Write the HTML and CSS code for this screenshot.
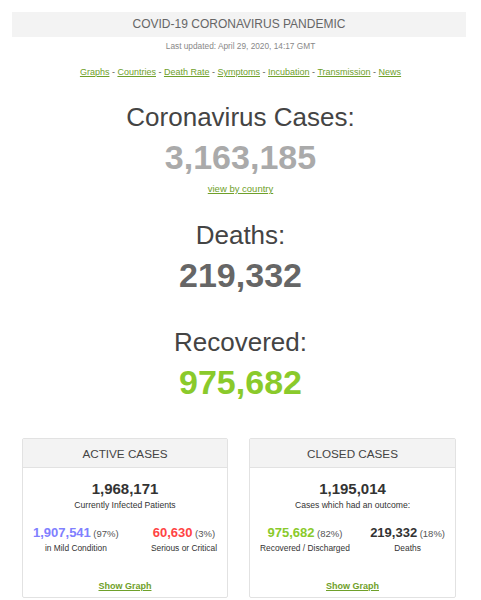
FILE: index.html
```html
<!DOCTYPE html>
<html lang="en">
<head>
<meta charset="utf-8">
<title>COVID-19 Coronavirus Pandemic</title>
<link rel="stylesheet" href="styles.css">
</head>
<body>
<div class="page">
  <div class="title-bar">COVID-19 CORONAVIRUS PANDEMIC</div>
  <div class="updated">Last updated: April 29, 2020, 14:17 GMT</div>
  <nav class="links">
    <a href="#">Graphs</a> - <a href="#">Countries</a> - <a href="#">Death Rate</a> - <a href="#">Symptoms</a> - <a href="#">Incubation</a> - <a href="#">Transmission</a> - <a href="#">News</a>
  </nav>

  <section class="counter">
    <h1 class="counter-label">Coronavirus Cases:</h1>
    <div class="counter-number cases">3,163,185</div>
    <a class="view-link" href="#">view by country</a>
  </section>

  <section class="counter deaths-block">
    <h1 class="counter-label">Deaths:</h1>
    <div class="counter-number deaths">219,332</div>
  </section>

  <section class="counter recovered-block">
    <h1 class="counter-label">Recovered:</h1>
    <div class="counter-number recovered">975,682</div>
  </section>

  <div class="cards">
    <div class="card">
      <div class="card-head">ACTIVE CASES</div>
      <div class="card-body">
        <div class="total">1,968,171</div>
        <div class="total-caption">Currently Infected Patients</div>
        <div class="split">
          <div class="split-col">
            <div><span class="num mild">1,907,541</span> <span class="pct">(97%)</span></div>
            <div class="split-caption">in Mild Condition</div>
          </div>
          <div class="split-col">
            <div><span class="num critical">60,630</span> <span class="pct">(3%)</span></div>
            <div class="split-caption">Serious or Critical</div>
          </div>
        </div>
        <a class="graph-link" href="#">Show Graph</a>
      </div>
    </div>

    <div class="card">
      <div class="card-head">CLOSED CASES</div>
      <div class="card-body">
        <div class="total">1,195,014</div>
        <div class="total-caption">Cases which had an outcome:</div>
        <div class="split">
          <div class="split-col">
            <div><span class="num good">975,682</span> <span class="pct">(82%)</span></div>
            <div class="split-caption">Recovered / Discharged</div>
          </div>
          <div class="split-col">
            <div><span class="num dark">219,332</span> <span class="pct">(18%)</span></div>
            <div class="split-caption">Deaths</div>
          </div>
        </div>
        <a class="graph-link" href="#">Show Graph</a>
      </div>
    </div>
  </div>
</div>
</body>
</html>
```

FILE: styles.css
```css
html, body {
  margin: 0;
  padding: 0;
  background: #ffffff;
}

body {
  font-family: "Liberation Sans", Arial, sans-serif;
  color: #444;
}

.page {
  padding-top: 12px;
  text-align: center;
}

.title-bar {
  margin: 0 15px 0 12px;
  height: 25px;
  line-height: 25px;
  background: #f3f3f3;
  color: #666;
  font-size: 12px;
}

.updated {
  margin-top: 3px;
  font-size: 8.3px;
  line-height: 12px;
  color: #888;
}

.links {
  margin-top: 14px;
  font-size: 9px;
  line-height: 12px;
  color: #555;
}

.links a,
.view-link,
.graph-link {
  color: #6fa02a;
  text-decoration: underline;
}

.counter {
  display: flex;
  flex-direction: column;
  align-items: center;
}

.counter-label {
  margin: 0;
  font-size: 26px;
  line-height: 30px;
  font-weight: normal;
  color: #444;
}

.counter-number {
  font-size: 34px;
  line-height: 40px;
  font-weight: bold;
}

.counter:first-of-type {
  margin-top: 24px;
}

.counter-label + .counter-number {
  margin-top: 5px;
}

.cases { color: #aaa; }
.deaths { color: #666; }
.recovered { color: #8aca2b; }

.view-link {
  margin-top: 6px;
  font-size: 9.5px;
  line-height: 12px;
}

.deaths-block { margin-top: 25px; }
.recovered-block { margin-top: 32px; }

.cards {
  display: grid;
  grid-template-columns: 206px 207px;
  column-gap: 21px;
  margin: 36px 0 0 22px;
}

.card {
  border: 1px solid #e2e2e2;
  border-radius: 2px;
  background: #fff;
}

.card-head {
  height: 28px;
  line-height: 29px;
  background: #f3f3f3;
  border-bottom: 1px solid #e2e2e2;
  font-size: 11.7px;
  color: #444;
}

.card-body {
  display: flex;
  flex-direction: column;
  align-items: center;
  padding: 12px 0 5px;
}

.total {
  font-size: 15px;
  line-height: 18px;
  font-weight: bold;
  color: #333;
}

.total-caption {
  margin-top: 2px;
  font-size: 8.6px;
  line-height: 11px;
  color: #333;
}

.split {
  align-self: stretch;
  display: flex;
  justify-content: space-between;
  padding: 0 10px;
  margin-top: 14px;
}

.split-col {
  display: flex;
  flex-direction: column;
  align-items: center;
  font-size: 9px;
  line-height: 16px;
}

.num {
  font-size: 13px;
  font-weight: bold;
}

.mild { color: #8080ff; }
.critical { color: #ff4444; }
.good { color: #8aca2b; }
.dark { color: #333; }

.pct {
  font-size: 9.5px;
  color: #555;
}

.split-caption {
  font-size: 8.4px;
  line-height: 11px;
  margin-top: 1px;
  color: #333;
}

.graph-link {
  margin-top: 27px;
  font-size: 9px;
  line-height: 11px;
  font-weight: bold;
}
```
